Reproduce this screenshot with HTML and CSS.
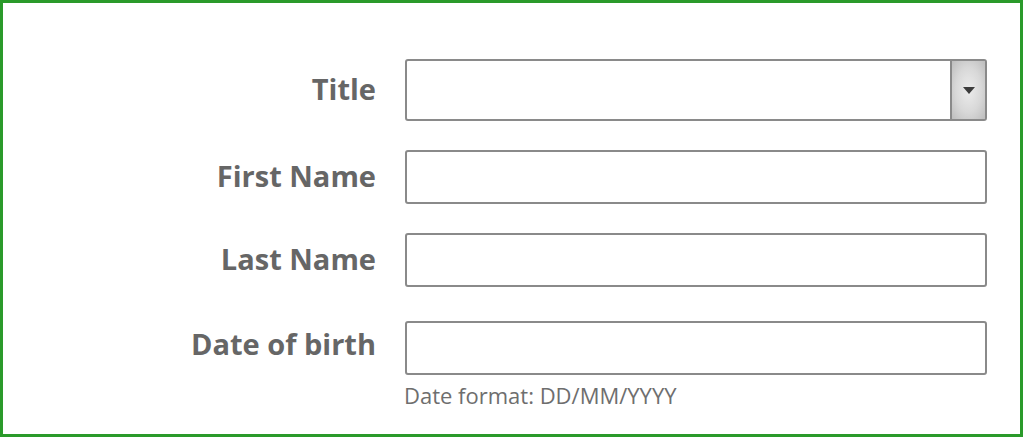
FILE: index.html
```html
<!DOCTYPE html>
<html>
<head>
<meta charset="utf-8">
<link rel="stylesheet" href="styles.css">
</head>
<body>
<div class="frame">
  <form class="form">
    <label class="label">Title</label>
    <div class="select">
      <div class="select-value"></div>
      <div class="select-btn"><span class="caret"></span></div>
    </div>

    <label class="label">First Name</label>
    <div class="input"></div>

    <label class="label">Last Name</label>
    <div class="input"></div>

    <label class="label dob">Date of birth</label>
    <div class="field dob">
      <div class="input"></div>
      <div class="hint">Date format: DD/MM/YYYY</div>
    </div>
  </form>
</div>
</body>
</html>
```

FILE: styles.css
```css
html, body {
  margin: 0;
  padding: 0;
  background: #ffffff;
}
.frame {
  box-sizing: border-box;
  width: 1023px;
  height: 437px;
  border: 3px solid #2a9a2a;
  padding-top: 56px;
  font-family: "Open Sans", "Liberation Sans", sans-serif;
}
.form {
  display: grid;
  grid-template-columns: 373px 582px;
  column-gap: 29px;
  row-gap: 29px;
  align-items: center;
}
.label {
  text-align: right;
  font-weight: 700;
  font-size: 29px;
  color: #666666;
  padding-bottom: 4px;
}
.label.dob {
  align-self: start;
  margin-top: 5px;
  padding-top: 3px;
  padding-bottom: 0;
}
.select {
  box-sizing: border-box;
  height: 62px;
  border: 2px solid #8a8a8a;
  border-radius: 3px;
  display: flex;
}
.select-value {
  flex: 1;
}
.select-btn {
  width: 33px;
  border-left: 2px solid #8a8a8a;
  background: radial-gradient(ellipse at center, #ececec 0%, #d8d8d8 55%, #bdbdbd 100%);
  display: flex;
  align-items: center;
  justify-content: center;
}
.caret {
  width: 0;
  height: 0;
  border-left: 6px solid transparent;
  border-right: 6px solid transparent;
  border-top: 7px solid #3c3c3c;
}
.input {
  box-sizing: border-box;
  height: 54px;
  width: 582px;
  border: 2px solid #8a8a8a;
  border-radius: 3px;
}
.field.dob {
  margin-top: 5px;
}
.hint {
  margin-top: 5px;
  font-size: 22px;
  color: #6e6e6e;
  line-height: 30px;
  margin-left: -1px;
}
```
